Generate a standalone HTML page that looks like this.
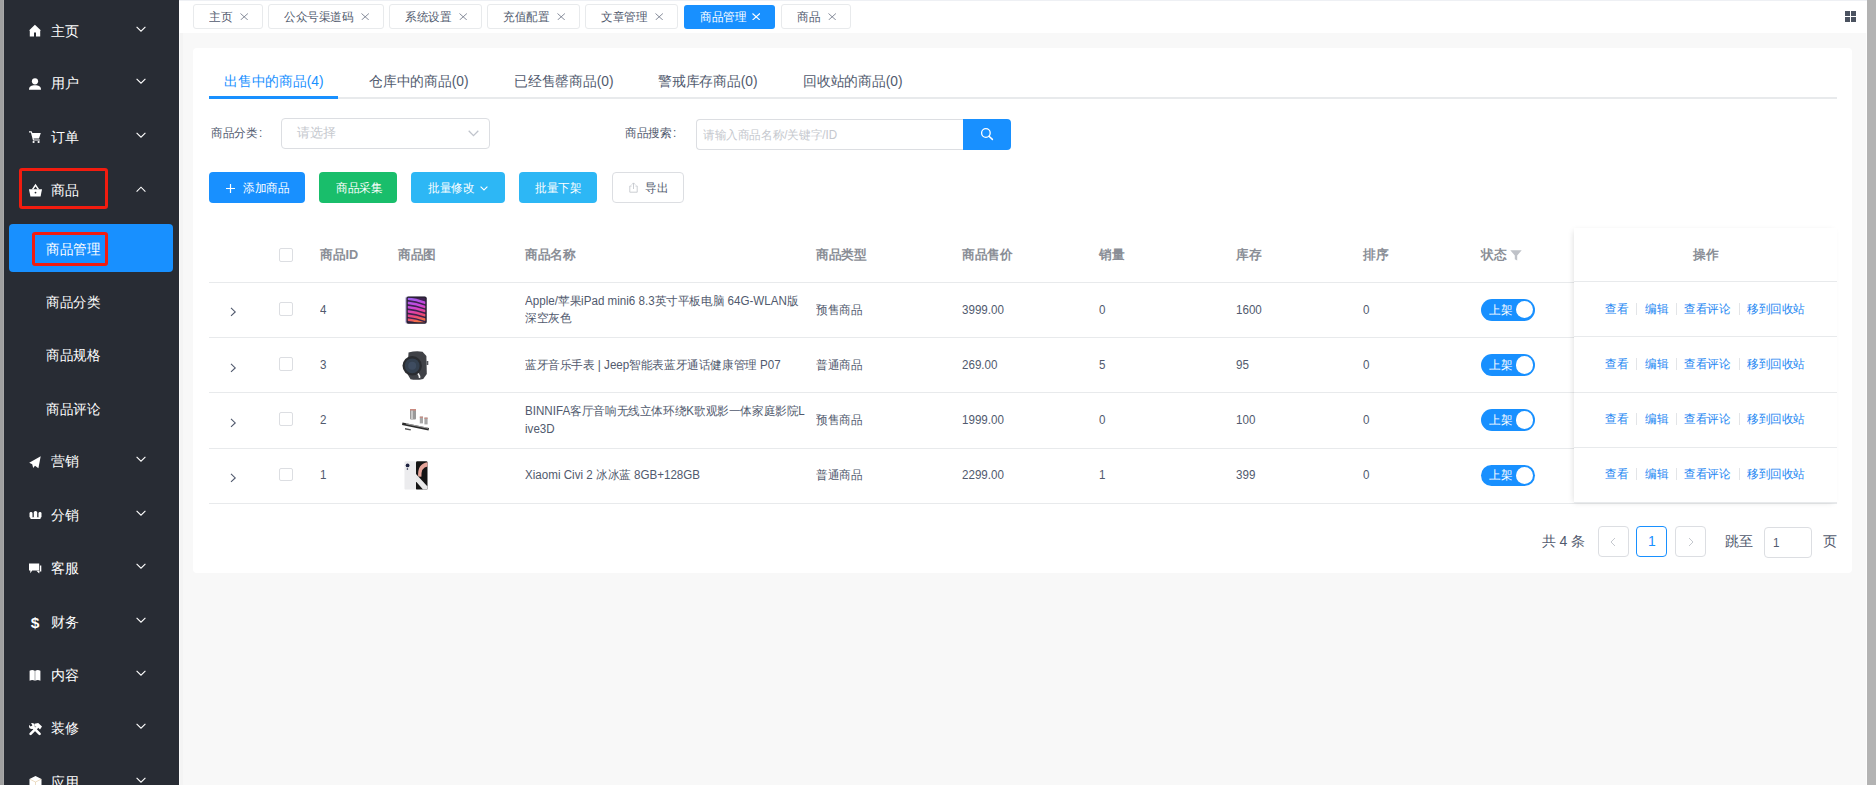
<!DOCTYPE html>
<html><head><meta charset="utf-8"><style>
*{box-sizing:border-box;margin:0;padding:0}
html,body{width:1876px;height:785px;overflow:hidden}
body{position:relative;background:#f8f8f8;font-family:"Liberation Sans",sans-serif;color:#515a6e;font-size:12px}
.a{position:absolute;white-space:nowrap}
svg{display:block}
</style></head><body>
<div class="a " style="left:0px;top:0px;width:3px;height:785px;background:#a0a0a0"></div>
<div class="a " style="left:3px;top:0px;width:1px;height:785px;background:#a9a9a9"></div>
<div class="a " style="left:4px;top:0px;width:175px;height:785px;background:#282c34"></div>
<div class="a " style="left:1867px;top:0px;width:9px;height:785px;background:#b3b3b3"></div>
<div class="a " style="left:179px;top:0px;width:1688px;height:33px;background:#fff"></div>
<div class="a " style="left:179px;top:0px;width:1688px;height:1px;background:#eef0f4"></div>
<svg class="a" style="left:29px;top:24.9px;overflow:visible" width="13" height="13" viewBox="0 0 13 13"><path d="M5.9 -0.2 L12 5.6 L11.2 5.6 L11.2 11.4 L7.0 11.4 L7.0 7.4 L5.0 7.4 L5.0 11.4 L0.8 11.4 L0.8 5.6 L0 5.6 Z" fill="#fff"/></svg>
<div class="a" style="left:51px;top:20.60px;height:21px;line-height:21px;font-size:14px;color:#fff;">主页</div>
<svg class="a" style="left:136px;top:25.6px" width="10" height="7" viewBox="0 0 10 7"><path d="M0.6 0.8 L5 5.2 L9.4 0.8" stroke="#fff" stroke-width="1.1" fill="none"/></svg>
<svg class="a" style="left:29px;top:77.6px;overflow:visible" width="13" height="13" viewBox="0 0 13 13"><circle cx="6" cy="3.3" r="3.1" fill="#fff"/><path d="M0 11.8 C0 8.2 2.5 7.2 6 7.2 C9.5 7.2 12 8.2 12 11.8 Z" fill="#fff"/></svg>
<div class="a" style="left:51px;top:73.30px;height:21px;line-height:21px;font-size:14px;color:#fff;">用户</div>
<svg class="a" style="left:136px;top:78.3px" width="10" height="7" viewBox="0 0 10 7"><path d="M0.6 0.8 L5 5.2 L9.4 0.8" stroke="#fff" stroke-width="1.1" fill="none"/></svg>
<svg class="a" style="left:29px;top:131.0px;overflow:visible" width="13" height="13" viewBox="0 0 13 13"><path d="M0 0.3 L2.6 0.3 L3.4 2 L11.8 2 L10 7.6 L4.6 7.6 L4.9 8.6 L10.8 8.6 L10.8 9.6 L4 9.6 L1.9 1.6 L0 1.6 Z" fill="#fff"/><circle cx="4.6" cy="11" r="1.1" fill="#fff"/><circle cx="9.6" cy="11" r="1.1" fill="#fff"/></svg>
<div class="a" style="left:51px;top:126.70px;height:21px;line-height:21px;font-size:14px;color:#fff;">订单</div>
<svg class="a" style="left:136px;top:131.7px" width="10" height="7" viewBox="0 0 10 7"><path d="M0.6 0.8 L5 5.2 L9.4 0.8" stroke="#fff" stroke-width="1.1" fill="none"/></svg>
<svg class="a" style="left:29px;top:184.7px;overflow:visible" width="13" height="13" viewBox="0 0 13 13"><path d="M0 4.3 L13 4.3 L11.6 11.4 L1.4 11.4 Z" fill="#fff"/><path d="M3.6 4.3 L6.5 0 L9.4 4.3" stroke="#fff" stroke-width="1.5" fill="none"/><circle cx="6.5" cy="7.6" r="0.9" fill="#282c34"/></svg>
<div class="a" style="left:51px;top:180.40px;height:21px;line-height:21px;font-size:14px;color:#fff;">商品</div>
<svg class="a" style="left:136px;top:185.9px" width="10" height="7" viewBox="0 0 10 7"><path d="M0.6 5.6 L5 1.2 L9.4 5.6" stroke="#fff" stroke-width="1.1" fill="none"/></svg>
<svg class="a" style="left:29px;top:455.7px;overflow:visible" width="13" height="13" viewBox="0 0 13 13"><path d="M11.7 0.3 L0.2 6.8 L3.2 8.3 L4.2 12 L6 9.8 L9.4 12.3 Z" fill="#fff"/></svg>
<div class="a" style="left:51px;top:451.40px;height:21px;line-height:21px;font-size:14px;color:#fff;">营销</div>
<svg class="a" style="left:136px;top:456.4px" width="10" height="7" viewBox="0 0 10 7"><path d="M0.6 0.8 L5 5.2 L9.4 0.8" stroke="#fff" stroke-width="1.1" fill="none"/></svg>
<svg class="a" style="left:29px;top:509.1px;overflow:visible" width="13" height="13" viewBox="0 0 13 13"><rect x="0.5" y="3" width="3" height="6" rx="1.4" fill="#fff"/><rect x="4.8" y="2" width="3.4" height="7" rx="1.6" fill="#fff"/><rect x="9.5" y="3" width="3" height="6" rx="1.4" fill="#fff"/><rect x="1.5" y="8.2" width="10" height="1.8" fill="#fff"/></svg>
<div class="a" style="left:51px;top:504.80px;height:21px;line-height:21px;font-size:14px;color:#fff;">分销</div>
<svg class="a" style="left:136px;top:509.8px" width="10" height="7" viewBox="0 0 10 7"><path d="M0.6 0.8 L5 5.2 L9.4 0.8" stroke="#fff" stroke-width="1.1" fill="none"/></svg>
<svg class="a" style="left:29px;top:562.5px;overflow:visible" width="13" height="13" viewBox="0 0 13 13"><path d="M0 0.6 H10.2 V7.4 H3.2 L1.3 10.2 V7.4 H0 Z" fill="#fff"/><path d="M10.9 2.4 H12.3 V8.4 H10.9 Z M7.4 7.8 H10.6 L10.2 10.4 Z" fill="#fff"/></svg>
<div class="a" style="left:51px;top:558.20px;height:21px;line-height:21px;font-size:14px;color:#fff;">客服</div>
<svg class="a" style="left:136px;top:563.2px" width="10" height="7" viewBox="0 0 10 7"><path d="M0.6 0.8 L5 5.2 L9.4 0.8" stroke="#fff" stroke-width="1.1" fill="none"/></svg>
<svg class="a" style="left:29px;top:615.8px;overflow:visible" width="13" height="13" viewBox="0 0 13 13"><text x="6" y="12" font-size="15.5" font-weight="bold" text-anchor="middle" fill="#fff" font-family="Liberation Sans">$</text></svg>
<div class="a" style="left:51px;top:611.50px;height:21px;line-height:21px;font-size:14px;color:#fff;">财务</div>
<svg class="a" style="left:136px;top:616.5px" width="10" height="7" viewBox="0 0 10 7"><path d="M0.6 0.8 L5 5.2 L9.4 0.8" stroke="#fff" stroke-width="1.1" fill="none"/></svg>
<svg class="a" style="left:29px;top:669.2px;overflow:visible" width="13" height="13" viewBox="0 0 13 13"><path d="M0.6 1.8 Q3.2 0.2 5.8 1.8 L5.8 11.8 Q3.2 10 0.6 11.8 Z M6.2 1.8 Q8.8 0.2 11.4 1.8 L11.4 11.8 Q8.8 10 6.2 11.8 Z" fill="#fff"/></svg>
<div class="a" style="left:51px;top:664.90px;height:21px;line-height:21px;font-size:14px;color:#fff;">内容</div>
<svg class="a" style="left:136px;top:669.9px" width="10" height="7" viewBox="0 0 10 7"><path d="M0.6 0.8 L5 5.2 L9.4 0.8" stroke="#fff" stroke-width="1.1" fill="none"/></svg>
<svg class="a" style="left:29px;top:722.6px;overflow:visible" width="13" height="13" viewBox="0 0 13 13"><path d="M8.2 4.2 L1.6 10.8" stroke="#fff" stroke-width="2.6" stroke-linecap="round"/><path d="M3.8 4 L10.6 10.8" stroke="#fff" stroke-width="2.6" stroke-linecap="round"/><circle cx="2.9" cy="3" r="2.9" fill="#fff"/><path d="M-0.5 1.2 L1.8 -0.5 L3.4 2.6 L1.6 3.6 Z" fill="#282c34"/><path d="M5.4 0.8 L9.2 0 L13 3.6 L11 6.4 L8.2 3.8 L6 3.6 Z" fill="#fff"/></svg>
<div class="a" style="left:51px;top:718.30px;height:21px;line-height:21px;font-size:14px;color:#fff;">装修</div>
<svg class="a" style="left:136px;top:723.3px" width="10" height="7" viewBox="0 0 10 7"><path d="M0.6 0.8 L5 5.2 L9.4 0.8" stroke="#fff" stroke-width="1.1" fill="none"/></svg>
<svg class="a" style="left:29px;top:775.8px;overflow:visible" width="13" height="13" viewBox="0 0 13 13"><path d="M6.5 0 L12.5 3 L12.5 10 L6.5 13 L0.5 10 L0.5 3 Z" fill="#fff"/><path d="M1 3.3 L6.5 6 L12 3.3 M6.5 6 L6.5 13" stroke="#e0c8a0" stroke-width="0.6" fill="none"/></svg>
<div class="a" style="left:51px;top:771.50px;height:21px;line-height:21px;font-size:14px;color:#fff;">应用</div>
<svg class="a" style="left:136px;top:776.5px" width="10" height="7" viewBox="0 0 10 7"><path d="M0.6 0.8 L5 5.2 L9.4 0.8" stroke="#fff" stroke-width="1.1" fill="none"/></svg>
<div class="a " style="left:9px;top:223.5px;width:164px;height:48.5px;background:#1890ff;border-radius:4px"></div>
<div class="a" style="left:46px;top:238.50px;height:21px;line-height:21px;font-size:14px;color:#fff;transform:scaleX(0.965);transform-origin:0 50%;">商品管理</div>
<div class="a" style="left:46px;top:292.30px;height:21px;line-height:21px;font-size:14px;color:#fff;transform:scaleX(0.965);transform-origin:0 50%;">商品分类</div>
<div class="a" style="left:46px;top:345.20px;height:21px;line-height:21px;font-size:14px;color:#fff;transform:scaleX(0.965);transform-origin:0 50%;">商品规格</div>
<div class="a" style="left:46px;top:398.50px;height:21px;line-height:21px;font-size:14px;color:#fff;transform:scaleX(0.965);transform-origin:0 50%;">商品评论</div>
<div class="a " style="left:19px;top:168px;width:89px;height:41px;border:3px solid #f21c0f;border-radius:3px"></div>
<div class="a " style="left:32px;top:232px;width:76px;height:34px;border:3px solid #f21c0f;border-radius:3px"></div>
<div class="a " style="left:193px;top:4px;width:70px;height:25px;background:#fff;border:1px solid #e8eaec;border-radius:3px"></div>
<div class="a" style="left:209px;top:8.00px;height:18px;line-height:18px;font-size:12px;color:#515a6e;transform:scaleX(0.967);transform-origin:0 50%;">主页</div>
<svg class="a" style="left:239.8px;top:12.8px" width="8.4" height="7.6" viewBox="0 0 8.4 7.6"><path d="M0.5 0.5 L7.9 7.1 M7.9 0.5 L0.5 7.1" stroke="#808695" stroke-width="0.95"/></svg>
<div class="a " style="left:268px;top:4px;width:116px;height:25px;background:#fff;border:1px solid #e8eaec;border-radius:3px"></div>
<div class="a" style="left:284px;top:8.00px;height:18px;line-height:18px;font-size:12px;color:#515a6e;transform:scaleX(0.967);transform-origin:0 50%;">公众号渠道码</div>
<svg class="a" style="left:360.8px;top:12.8px" width="8.4" height="7.6" viewBox="0 0 8.4 7.6"><path d="M0.5 0.5 L7.9 7.1 M7.9 0.5 L0.5 7.1" stroke="#808695" stroke-width="0.95"/></svg>
<div class="a " style="left:389px;top:4px;width:93px;height:25px;background:#fff;border:1px solid #e8eaec;border-radius:3px"></div>
<div class="a" style="left:405px;top:8.00px;height:18px;line-height:18px;font-size:12px;color:#515a6e;transform:scaleX(0.967);transform-origin:0 50%;">系统设置</div>
<svg class="a" style="left:458.8px;top:12.8px" width="8.4" height="7.6" viewBox="0 0 8.4 7.6"><path d="M0.5 0.5 L7.9 7.1 M7.9 0.5 L0.5 7.1" stroke="#808695" stroke-width="0.95"/></svg>
<div class="a " style="left:487px;top:4px;width:93px;height:25px;background:#fff;border:1px solid #e8eaec;border-radius:3px"></div>
<div class="a" style="left:503px;top:8.00px;height:18px;line-height:18px;font-size:12px;color:#515a6e;transform:scaleX(0.967);transform-origin:0 50%;">充值配置</div>
<svg class="a" style="left:556.8px;top:12.8px" width="8.4" height="7.6" viewBox="0 0 8.4 7.6"><path d="M0.5 0.5 L7.9 7.1 M7.9 0.5 L0.5 7.1" stroke="#808695" stroke-width="0.95"/></svg>
<div class="a " style="left:585px;top:4px;width:93px;height:25px;background:#fff;border:1px solid #e8eaec;border-radius:3px"></div>
<div class="a" style="left:601px;top:8.00px;height:18px;line-height:18px;font-size:12px;color:#515a6e;transform:scaleX(0.967);transform-origin:0 50%;">文章管理</div>
<svg class="a" style="left:654.8px;top:12.8px" width="8.4" height="7.6" viewBox="0 0 8.4 7.6"><path d="M0.5 0.5 L7.9 7.1 M7.9 0.5 L0.5 7.1" stroke="#808695" stroke-width="0.95"/></svg>
<div class="a " style="left:684px;top:5px;width:91.20000000000005px;height:23.5px;background:#1890ff;border-radius:3px"></div>
<div class="a" style="left:700px;top:8.00px;height:18px;line-height:18px;font-size:12px;color:#fff;transform:scaleX(0.967);transform-origin:0 50%;">商品管理</div>
<svg class="a" style="left:752.0px;top:12.8px" width="8.4" height="7.6" viewBox="0 0 8.4 7.6"><path d="M0.5 0.5 L7.9 7.1 M7.9 0.5 L0.5 7.1" stroke="#fff" stroke-width="1.1"/></svg>
<div class="a " style="left:781px;top:4px;width:70px;height:25px;background:#fff;border:1px solid #e8eaec;border-radius:3px"></div>
<div class="a" style="left:797px;top:8.00px;height:18px;line-height:18px;font-size:12px;color:#515a6e;transform:scaleX(0.967);transform-origin:0 50%;">商品</div>
<svg class="a" style="left:827.8px;top:12.8px" width="8.4" height="7.6" viewBox="0 0 8.4 7.6"><path d="M0.5 0.5 L7.9 7.1 M7.9 0.5 L0.5 7.1" stroke="#808695" stroke-width="0.95"/></svg>
<div class="a " style="left:1845.3px;top:11.3px;width:4.6px;height:4.6px;background:#4b5260"></div>
<div class="a " style="left:1851.3px;top:11.3px;width:4.6px;height:4.6px;background:#4b5260"></div>
<div class="a " style="left:1845.3px;top:17.3px;width:4.6px;height:4.6px;background:#4b5260"></div>
<div class="a " style="left:1851.3px;top:17.3px;width:4.6px;height:4.6px;background:#4b5260"></div>
<div class="a " style="left:179px;top:33px;width:1px;height:752px;background:#fbfbfb"></div>
<div class="a " style="left:180px;top:33px;width:3px;height:752px;background:#f4f4f4"></div>
<div class="a " style="left:1866px;top:33px;width:1px;height:752px;background:#fdfdfd"></div>
<div class="a " style="left:193px;top:48px;width:1659px;height:525px;background:#fff;border-radius:4px"></div>
<div class="a " style="left:208.5px;top:97.2px;width:1628.5px;height:1.5px;background:#e8eaec"></div>
<div class="a" style="left:223.9px;top:70.50px;height:21px;line-height:21px;font-size:14px;color:#1890ff;transform:scaleX(0.985);transform-origin:0 50%;">出售中的商品(4)</div>
<div class="a" style="left:369.0px;top:70.50px;height:21px;line-height:21px;font-size:14px;color:#515a6e;transform:scaleX(0.985);transform-origin:0 50%;">仓库中的商品(0)</div>
<div class="a" style="left:514.1px;top:70.50px;height:21px;line-height:21px;font-size:14px;color:#515a6e;transform:scaleX(0.985);transform-origin:0 50%;">已经售罄商品(0)</div>
<div class="a" style="left:658.3px;top:70.50px;height:21px;line-height:21px;font-size:14px;color:#515a6e;transform:scaleX(0.985);transform-origin:0 50%;">警戒库存商品(0)</div>
<div class="a" style="left:802.9px;top:70.50px;height:21px;line-height:21px;font-size:14px;color:#515a6e;transform:scaleX(0.985);transform-origin:0 50%;">回收站的商品(0)</div>
<div class="a " style="left:208.5px;top:96.3px;width:129.5px;height:2.4px;background:#1890ff"></div>
<div class="a" style="left:211px;top:124.20px;height:18px;line-height:18px;font-size:12px;color:#515a6e;transform:scaleX(0.967);transform-origin:0 50%;">商品分类<span style="margin-left:1.6px">:</span></div>
<div class="a " style="left:281px;top:118px;width:209px;height:30.5px;border:1px solid #dcdee2;border-radius:4px;background:#fff"></div>
<div class="a" style="left:297px;top:123.30px;height:20px;line-height:20px;font-size:13px;color:#c5c8ce;">请选择</div>
<svg class="a" style="left:468px;top:130px" width="11" height="7" viewBox="0 0 11 7"><path d="M0.7 0.8 L5.5 5.6 L10.3 0.8" stroke="#c0c4cc" stroke-width="1.3" fill="none"/></svg>
<div class="a" style="left:625px;top:124.20px;height:18px;line-height:18px;font-size:12px;color:#515a6e;transform:scaleX(0.967);transform-origin:0 50%;">商品搜索<span style="margin-left:1.6px">:</span></div>
<div class="a " style="left:695.5px;top:119px;width:268px;height:30.8px;border:1px solid #dcdee2;border-right:none;border-radius:4px 0 0 4px;background:#fff"></div>
<div class="a" style="left:703px;top:125.50px;height:18px;line-height:18px;font-size:12px;color:#c5c8ce;transform:scaleX(0.967);transform-origin:0 50%;">请输入商品名称/关键字/ID</div>
<div class="a " style="left:963px;top:119px;width:48px;height:31px;background:#1890ff;border-radius:0 4px 4px 0"></div>
<svg class="a" style="left:979px;top:126px" width="16" height="16" viewBox="0 0 16 16"><circle cx="6.9" cy="7" r="4.3" stroke="#fff" stroke-width="1.3" fill="none"/><path d="M10 10.2 L13.4 13.4" stroke="#fff" stroke-width="1.5" stroke-linecap="round"/></svg>
<div class="a " style="left:208.8px;top:172px;width:95.89999999999998px;height:31px;background:#1890ff;border-radius:4px"></div>
<div class="a " style="left:319.4px;top:172px;width:77.40000000000003px;height:31px;background:#19be6b;border-radius:4px"></div>
<div class="a " style="left:411.3px;top:172px;width:93.59999999999997px;height:31px;background:#2db7f5;border-radius:4px"></div>
<div class="a " style="left:519px;top:172px;width:77.70000000000005px;height:31px;background:#2db7f5;border-radius:4px"></div>
<svg class="a" style="left:226px;top:183.5px" width="9" height="9" viewBox="0 0 9 9"><path d="M4.5 0 V9 M0 4.5 H9" stroke="#fff" stroke-width="1.2"/></svg>
<div class="a" style="left:243px;top:178.50px;height:18px;line-height:18px;font-size:12px;color:#fff;transform:scaleX(0.967);transform-origin:0 50%;">添加商品</div>
<div class="a" style="left:335.5px;top:178.50px;height:18px;line-height:18px;font-size:12px;color:#fff;transform:scaleX(0.967);transform-origin:0 50%;">商品采集</div>
<div class="a" style="left:427.5px;top:178.50px;height:18px;line-height:18px;font-size:12px;color:#fff;transform:scaleX(0.967);transform-origin:0 50%;">批量修改</div>
<svg class="a" style="left:480px;top:186px" width="8" height="5" viewBox="0 0 8 5"><path d="M0.6 0.6 L4 4 L7.4 0.6" stroke="#fff" stroke-width="1.1" fill="none"/></svg>
<div class="a" style="left:535px;top:178.50px;height:18px;line-height:18px;font-size:12px;color:#fff;transform:scaleX(0.967);transform-origin:0 50%;">批量下架</div>
<div class="a " style="left:611.5px;top:172px;width:72px;height:31px;border:1px solid #dcdee2;border-radius:4px;background:#fff"></div>
<svg class="a" style="left:628.5px;top:182px" width="9" height="11" viewBox="0 0 9 11"><path d="M2.6 4 H0.8 V10.2 H8.2 V4 H6.4 M4.5 7 V1 M2.8 2.6 L4.5 0.9 L6.2 2.6" stroke="#c5c8ce" stroke-width="0.9" fill="none"/></svg>
<div class="a" style="left:645px;top:178.50px;height:18px;line-height:18px;font-size:12px;color:#515a6e;transform:scaleX(0.967);transform-origin:0 50%;">导出</div>
<div class="a" style="left:320px;top:244.90px;height:20px;line-height:20px;font-size:13px;color:#8a8e96;transform:scaleX(0.977);transform-origin:0 50%;font-weight:bold">商品ID</div>
<div class="a" style="left:398px;top:244.90px;height:20px;line-height:20px;font-size:13px;color:#8a8e96;transform:scaleX(0.977);transform-origin:0 50%;font-weight:bold">商品图</div>
<div class="a" style="left:524.5px;top:244.90px;height:20px;line-height:20px;font-size:13px;color:#8a8e96;transform:scaleX(0.977);transform-origin:0 50%;font-weight:bold">商品名称</div>
<div class="a" style="left:815.5px;top:244.90px;height:20px;line-height:20px;font-size:13px;color:#8a8e96;transform:scaleX(0.977);transform-origin:0 50%;font-weight:bold">商品类型</div>
<div class="a" style="left:962.3px;top:244.90px;height:20px;line-height:20px;font-size:13px;color:#8a8e96;transform:scaleX(0.977);transform-origin:0 50%;font-weight:bold">商品售价</div>
<div class="a" style="left:1099px;top:244.90px;height:20px;line-height:20px;font-size:13px;color:#8a8e96;transform:scaleX(0.977);transform-origin:0 50%;font-weight:bold">销量</div>
<div class="a" style="left:1235.5px;top:244.90px;height:20px;line-height:20px;font-size:13px;color:#8a8e96;transform:scaleX(0.977);transform-origin:0 50%;font-weight:bold">库存</div>
<div class="a" style="left:1363px;top:244.90px;height:20px;line-height:20px;font-size:13px;color:#8a8e96;transform:scaleX(0.977);transform-origin:0 50%;font-weight:bold">排序</div>
<div class="a" style="left:1480.6px;top:244.90px;height:20px;line-height:20px;font-size:13px;color:#8a8e96;transform:scaleX(0.977);transform-origin:0 50%;font-weight:bold">状态</div>
<svg class="a" style="left:1510px;top:249.5px" width="12" height="11" viewBox="0 0 12 11"><path d="M0.3 0.3 H11.7 L7.2 5.4 V10.4 L4.8 9.2 V5.4 Z" fill="#bfc2c8"/></svg>
<div class="a " style="left:279.3px;top:248px;width:13.6px;height:13.6px;border:1px solid #dcdee2;border-radius:2px;background:#fff"></div>
<div class="a " style="left:208.5px;top:282px;width:1628.5px;height:1px;background:#e8eaec"></div>
<div class="a " style="left:208.5px;top:337px;width:1628.5px;height:1px;background:#e8eaec"></div>
<div class="a " style="left:208.5px;top:392px;width:1628.5px;height:1px;background:#e8eaec"></div>
<div class="a " style="left:208.5px;top:447.5px;width:1628.5px;height:1px;background:#e8eaec"></div>
<div class="a " style="left:208.5px;top:503px;width:1628.5px;height:1px;background:#e8eaec"></div>
<svg class="a" style="left:229.6px;top:307.4px" width="7" height="10" viewBox="0 0 7 10"><path d="M1 0.9 L5.2 4.9 L1 8.9" stroke="#515a6e" stroke-width="1.15" fill="none"/></svg>
<div class="a " style="left:279.3px;top:302.0px;width:13.6px;height:13.6px;border:1px solid #dcdee2;border-radius:2px;background:#fff"></div>
<div class="a" style="left:320px;top:300.60px;height:18px;line-height:18px;font-size:12px;color:#515a6e;transform:scaleX(0.967);transform-origin:0 50%;">4</div>
<svg class="a" style="left:397.5px;top:291.6px" width="36" height="36" viewBox="0 0 36 36"><defs><linearGradient id="ipg" x1="0" y1="0" x2="0.2" y2="1"><stop offset="0" stop-color="#9a60f0"/><stop offset="0.4" stop-color="#d044d8"/><stop offset="0.72" stop-color="#ea4480"/><stop offset="1" stop-color="#f27540"/></linearGradient><clipPath id="ipc"><rect x="9.8" y="5.8" width="17.5" height="24.5"/></clipPath></defs><rect x="7.2" y="4.4" width="21.5" height="27.3" rx="2" fill="#c2b6e0"/><rect x="8.4" y="4.4" width="20.3" height="27.3" rx="2" fill="#27232d"/><rect x="9.8" y="5.8" width="17.5" height="24.5" fill="#3d2250"/><g clip-path="url(#ipc)"><path d="M9 6.6 Q18 7.6 28 11 M9 10.8 Q18 11.8 28 15.2 M9 15 Q18 16 28 19.4 M9 19.2 Q18 20.2 28 23.6 M9 23.4 Q18 24.4 28 27.8 M9 27.6 Q18 28.6 28 32" stroke="url(#ipg)" stroke-width="2.5" fill="none"/></g></svg>
<div class="a" style="left:524.5px;top:291.80px;height:18px;line-height:18px;font-size:12px;color:#515a6e;transform:scaleX(0.967);transform-origin:0 50%;">Apple/苹果iPad mini6 8.3英寸平板电脑 64G-WLAN版</div>
<div class="a" style="left:524.5px;top:309.40px;height:18px;line-height:18px;font-size:12px;color:#515a6e;transform:scaleX(0.967);transform-origin:0 50%;">深空灰色</div>
<div class="a" style="left:815.5px;top:300.60px;height:18px;line-height:18px;font-size:12px;color:#515a6e;transform:scaleX(0.967);transform-origin:0 50%;">预售商品</div>
<div class="a" style="left:962.3px;top:300.60px;height:18px;line-height:18px;font-size:12px;color:#515a6e;transform:scaleX(0.967);transform-origin:0 50%;">3999.00</div>
<div class="a" style="left:1099px;top:300.60px;height:18px;line-height:18px;font-size:12px;color:#515a6e;transform:scaleX(0.967);transform-origin:0 50%;">0</div>
<div class="a" style="left:1235.5px;top:300.60px;height:18px;line-height:18px;font-size:12px;color:#515a6e;transform:scaleX(0.967);transform-origin:0 50%;">1600</div>
<div class="a" style="left:1363px;top:300.60px;height:18px;line-height:18px;font-size:12px;color:#515a6e;transform:scaleX(0.967);transform-origin:0 50%;">0</div>
<div class="a " style="left:1480.7px;top:299.0px;width:54.5px;height:21.7px;background:#1890ff;border-radius:11px"></div>
<div class="a " style="left:1515.7px;top:300.90000000000003px;width:17.6px;height:17.6px;background:#fff;border-radius:50%"></div>
<div class="a" style="left:1488.5px;top:300.60px;height:18px;line-height:18px;font-size:12px;color:#fff;transform:scaleX(0.967);transform-origin:0 50%;">上架</div>
<svg class="a" style="left:229.6px;top:362.6px" width="7" height="10" viewBox="0 0 7 10"><path d="M1 0.9 L5.2 4.9 L1 8.9" stroke="#515a6e" stroke-width="1.15" fill="none"/></svg>
<div class="a " style="left:279.3px;top:357.2px;width:13.6px;height:13.6px;border:1px solid #dcdee2;border-radius:2px;background:#fff"></div>
<div class="a" style="left:320px;top:355.80px;height:18px;line-height:18px;font-size:12px;color:#515a6e;transform:scaleX(0.967);transform-origin:0 50%;">3</div>
<svg class="a" style="left:397.5px;top:346.8px" width="36" height="36" viewBox="0 0 36 36"><path d="M10.5 5.5 Q18 3.6 24.5 4.8 L28.4 9 L28.8 27 L25.2 32 Q18 33.6 12.5 32.2 L9.5 27 Z" fill="#404247"/><rect x="28.5" y="14" width="1.8" height="4" fill="#55575c"/><circle cx="14.2" cy="18.8" r="9.7" fill="#2a2c30"/><circle cx="14.2" cy="18.8" r="7.4" fill="#34404f"/><circle cx="14.2" cy="18.8" r="4" fill="#3e4c60"/><path d="M20 26.5 Q22 29 21.5 31" stroke="#f4f4f4" stroke-width="1.6" fill="none"/></svg>
<div class="a" style="left:524.5px;top:355.80px;height:18px;line-height:18px;font-size:12px;color:#515a6e;transform:scaleX(0.967);transform-origin:0 50%;">蓝牙音乐手表 | Jeep智能表蓝牙通话健康管理 P07</div>
<div class="a" style="left:815.5px;top:355.80px;height:18px;line-height:18px;font-size:12px;color:#515a6e;transform:scaleX(0.967);transform-origin:0 50%;">普通商品</div>
<div class="a" style="left:962.3px;top:355.80px;height:18px;line-height:18px;font-size:12px;color:#515a6e;transform:scaleX(0.967);transform-origin:0 50%;">269.00</div>
<div class="a" style="left:1099px;top:355.80px;height:18px;line-height:18px;font-size:12px;color:#515a6e;transform:scaleX(0.967);transform-origin:0 50%;">5</div>
<div class="a" style="left:1235.5px;top:355.80px;height:18px;line-height:18px;font-size:12px;color:#515a6e;transform:scaleX(0.967);transform-origin:0 50%;">95</div>
<div class="a" style="left:1363px;top:355.80px;height:18px;line-height:18px;font-size:12px;color:#515a6e;transform:scaleX(0.967);transform-origin:0 50%;">0</div>
<div class="a " style="left:1480.7px;top:354.2px;width:54.5px;height:21.7px;background:#1890ff;border-radius:11px"></div>
<div class="a " style="left:1515.7px;top:356.1px;width:17.6px;height:17.6px;background:#fff;border-radius:50%"></div>
<div class="a" style="left:1488.5px;top:355.80px;height:18px;line-height:18px;font-size:12px;color:#fff;transform:scaleX(0.967);transform-origin:0 50%;">上架</div>
<svg class="a" style="left:229.6px;top:417.8px" width="7" height="10" viewBox="0 0 7 10"><path d="M1 0.9 L5.2 4.9 L1 8.9" stroke="#515a6e" stroke-width="1.15" fill="none"/></svg>
<div class="a " style="left:279.3px;top:412.4px;width:13.6px;height:13.6px;border:1px solid #dcdee2;border-radius:2px;background:#fff"></div>
<div class="a" style="left:320px;top:411.00px;height:18px;line-height:18px;font-size:12px;color:#515a6e;transform:scaleX(0.967);transform-origin:0 50%;">2</div>
<svg class="a" style="left:397.5px;top:402.0px" width="36" height="36" viewBox="0 0 36 36"><rect x="12" y="7" width="6" height="10.5" rx="1" fill="#9a9a9a"/><rect x="12" y="7" width="6" height="1.6" fill="#c98a80"/><rect x="13" y="8.6" width="2" height="8.8" fill="#c8c8c8"/><rect x="21.8" y="14.6" width="3.2" height="6.8" fill="#a8a8a8"/><rect x="21.8" y="14.6" width="3.2" height="1.2" fill="#c98a80"/><rect x="26.4" y="15.6" width="3.2" height="6.8" fill="#a8a8a8"/><rect x="26.4" y="15.6" width="3.2" height="1.2" fill="#c98a80"/><path d="M4.5 20.5 L31 26 L30.5 28.6 L4 23 Z" fill="#2c2c2c"/><path d="M8 21.8 L30 26.2" stroke="#bbbbbb" stroke-width="0.8"/><path d="M7 26 L13 27.2 L12.6 28.6 L7 27.6 Z" fill="#555"/></svg>
<div class="a" style="left:524.5px;top:402.20px;height:18px;line-height:18px;font-size:12px;color:#515a6e;transform:scaleX(0.967);transform-origin:0 50%;">BINNIFA客厅音响无线立体环绕K歌观影一体家庭影院L</div>
<div class="a" style="left:524.5px;top:419.80px;height:18px;line-height:18px;font-size:12px;color:#515a6e;transform:scaleX(0.967);transform-origin:0 50%;">ive3D</div>
<div class="a" style="left:815.5px;top:411.00px;height:18px;line-height:18px;font-size:12px;color:#515a6e;transform:scaleX(0.967);transform-origin:0 50%;">预售商品</div>
<div class="a" style="left:962.3px;top:411.00px;height:18px;line-height:18px;font-size:12px;color:#515a6e;transform:scaleX(0.967);transform-origin:0 50%;">1999.00</div>
<div class="a" style="left:1099px;top:411.00px;height:18px;line-height:18px;font-size:12px;color:#515a6e;transform:scaleX(0.967);transform-origin:0 50%;">0</div>
<div class="a" style="left:1235.5px;top:411.00px;height:18px;line-height:18px;font-size:12px;color:#515a6e;transform:scaleX(0.967);transform-origin:0 50%;">100</div>
<div class="a" style="left:1363px;top:411.00px;height:18px;line-height:18px;font-size:12px;color:#515a6e;transform:scaleX(0.967);transform-origin:0 50%;">0</div>
<div class="a " style="left:1480.7px;top:409.4px;width:54.5px;height:21.7px;background:#1890ff;border-radius:11px"></div>
<div class="a " style="left:1515.7px;top:411.3px;width:17.6px;height:17.6px;background:#fff;border-radius:50%"></div>
<div class="a" style="left:1488.5px;top:411.00px;height:18px;line-height:18px;font-size:12px;color:#fff;transform:scaleX(0.967);transform-origin:0 50%;">上架</div>
<svg class="a" style="left:229.6px;top:473.2px" width="7" height="10" viewBox="0 0 7 10"><path d="M1 0.9 L5.2 4.9 L1 8.9" stroke="#515a6e" stroke-width="1.15" fill="none"/></svg>
<div class="a " style="left:279.3px;top:467.79999999999995px;width:13.6px;height:13.6px;border:1px solid #dcdee2;border-radius:2px;background:#fff"></div>
<div class="a" style="left:320px;top:466.40px;height:18px;line-height:18px;font-size:12px;color:#515a6e;transform:scaleX(0.967);transform-origin:0 50%;">1</div>
<svg class="a" style="left:397.5px;top:457.4px" width="36" height="36" viewBox="0 0 36 36"><rect x="6.5" y="4.3" width="11.5" height="28.3" rx="1.2" fill="#ececee"/><circle cx="9.6" cy="8.4" r="1.9" fill="#1d2240"/><circle cx="9.4" cy="12" r="0.8" fill="#1d2240"/><rect x="18" y="4.3" width="11.5" height="28.3" rx="1.2" fill="#141414"/><path d="M29.5 5.2 Q19.2 6.8 20.2 19.5 L23.4 19.8 Q23 10.2 29.5 9.4 Z" fill="#e6a59a"/><path d="M18 17 L29.5 29.5 L29.5 32.6 L25 32.6 L18 24.5 Z" fill="#e9e9e9"/></svg>
<div class="a" style="left:524.5px;top:466.40px;height:18px;line-height:18px;font-size:12px;color:#515a6e;transform:scaleX(0.967);transform-origin:0 50%;">Xiaomi Civi 2 冰冰蓝 8GB+128GB</div>
<div class="a" style="left:815.5px;top:466.40px;height:18px;line-height:18px;font-size:12px;color:#515a6e;transform:scaleX(0.967);transform-origin:0 50%;">普通商品</div>
<div class="a" style="left:962.3px;top:466.40px;height:18px;line-height:18px;font-size:12px;color:#515a6e;transform:scaleX(0.967);transform-origin:0 50%;">2299.00</div>
<div class="a" style="left:1099px;top:466.40px;height:18px;line-height:18px;font-size:12px;color:#515a6e;transform:scaleX(0.967);transform-origin:0 50%;">1</div>
<div class="a" style="left:1235.5px;top:466.40px;height:18px;line-height:18px;font-size:12px;color:#515a6e;transform:scaleX(0.967);transform-origin:0 50%;">399</div>
<div class="a" style="left:1363px;top:466.40px;height:18px;line-height:18px;font-size:12px;color:#515a6e;transform:scaleX(0.967);transform-origin:0 50%;">0</div>
<div class="a " style="left:1480.7px;top:464.79999999999995px;width:54.5px;height:21.7px;background:#1890ff;border-radius:11px"></div>
<div class="a " style="left:1515.7px;top:466.7px;width:17.6px;height:17.6px;background:#fff;border-radius:50%"></div>
<div class="a" style="left:1488.5px;top:466.40px;height:18px;line-height:18px;font-size:12px;color:#fff;transform:scaleX(0.967);transform-origin:0 50%;">上架</div>
<div class="a " style="left:1573.5px;top:228px;width:263.5px;height:275px;background:#fff;box-shadow:-2px 1px 6px -2px rgba(0,0,0,0.15)"></div>
<div class="a" style="left:1692.8px;top:244.90px;height:20px;line-height:20px;font-size:13px;color:#8a8e96;transform:scaleX(0.977);transform-origin:0 50%;font-weight:bold">操作</div>
<div class="a " style="left:1573.5px;top:281px;width:263.5px;height:1px;background:#e8eaec"></div>
<div class="a " style="left:1573.5px;top:336px;width:263.5px;height:1px;background:#e8eaec"></div>
<div class="a " style="left:1573.5px;top:391.5px;width:263.5px;height:1px;background:#e8eaec"></div>
<div class="a " style="left:1573.5px;top:447px;width:263.5px;height:1px;background:#e8eaec"></div>
<div class="a " style="left:1573.5px;top:502px;width:263.5px;height:1px;background:#e8eaec"></div>
<div class="a" style="left:1605px;top:299.60px;height:18px;line-height:18px;font-size:12px;color:#1c86f2;transform:scaleX(0.967);transform-origin:0 50%;">查看</div>
<div class="a" style="left:1644.6px;top:299.60px;height:18px;line-height:18px;font-size:12px;color:#1c86f2;transform:scaleX(0.967);transform-origin:0 50%;">编辑</div>
<div class="a" style="left:1684.3px;top:299.60px;height:18px;line-height:18px;font-size:12px;color:#1c86f2;transform:scaleX(0.967);transform-origin:0 50%;">查看评论</div>
<div class="a" style="left:1747.4px;top:299.60px;height:18px;line-height:18px;font-size:12px;color:#1c86f2;transform:scaleX(0.967);transform-origin:0 50%;">移到回收站</div>
<div class="a " style="left:1636px;top:302.6px;width:1px;height:12px;background:#e3e5e8"></div>
<div class="a " style="left:1676.1px;top:302.6px;width:1px;height:12px;background:#e3e5e8"></div>
<div class="a " style="left:1738.9px;top:302.6px;width:1px;height:12px;background:#e3e5e8"></div>
<div class="a" style="left:1605px;top:354.80px;height:18px;line-height:18px;font-size:12px;color:#1c86f2;transform:scaleX(0.967);transform-origin:0 50%;">查看</div>
<div class="a" style="left:1644.6px;top:354.80px;height:18px;line-height:18px;font-size:12px;color:#1c86f2;transform:scaleX(0.967);transform-origin:0 50%;">编辑</div>
<div class="a" style="left:1684.3px;top:354.80px;height:18px;line-height:18px;font-size:12px;color:#1c86f2;transform:scaleX(0.967);transform-origin:0 50%;">查看评论</div>
<div class="a" style="left:1747.4px;top:354.80px;height:18px;line-height:18px;font-size:12px;color:#1c86f2;transform:scaleX(0.967);transform-origin:0 50%;">移到回收站</div>
<div class="a " style="left:1636px;top:357.8px;width:1px;height:12px;background:#e3e5e8"></div>
<div class="a " style="left:1676.1px;top:357.8px;width:1px;height:12px;background:#e3e5e8"></div>
<div class="a " style="left:1738.9px;top:357.8px;width:1px;height:12px;background:#e3e5e8"></div>
<div class="a" style="left:1605px;top:410.00px;height:18px;line-height:18px;font-size:12px;color:#1c86f2;transform:scaleX(0.967);transform-origin:0 50%;">查看</div>
<div class="a" style="left:1644.6px;top:410.00px;height:18px;line-height:18px;font-size:12px;color:#1c86f2;transform:scaleX(0.967);transform-origin:0 50%;">编辑</div>
<div class="a" style="left:1684.3px;top:410.00px;height:18px;line-height:18px;font-size:12px;color:#1c86f2;transform:scaleX(0.967);transform-origin:0 50%;">查看评论</div>
<div class="a" style="left:1747.4px;top:410.00px;height:18px;line-height:18px;font-size:12px;color:#1c86f2;transform:scaleX(0.967);transform-origin:0 50%;">移到回收站</div>
<div class="a " style="left:1636px;top:413px;width:1px;height:12px;background:#e3e5e8"></div>
<div class="a " style="left:1676.1px;top:413px;width:1px;height:12px;background:#e3e5e8"></div>
<div class="a " style="left:1738.9px;top:413px;width:1px;height:12px;background:#e3e5e8"></div>
<div class="a" style="left:1605px;top:465.40px;height:18px;line-height:18px;font-size:12px;color:#1c86f2;transform:scaleX(0.967);transform-origin:0 50%;">查看</div>
<div class="a" style="left:1644.6px;top:465.40px;height:18px;line-height:18px;font-size:12px;color:#1c86f2;transform:scaleX(0.967);transform-origin:0 50%;">编辑</div>
<div class="a" style="left:1684.3px;top:465.40px;height:18px;line-height:18px;font-size:12px;color:#1c86f2;transform:scaleX(0.967);transform-origin:0 50%;">查看评论</div>
<div class="a" style="left:1747.4px;top:465.40px;height:18px;line-height:18px;font-size:12px;color:#1c86f2;transform:scaleX(0.967);transform-origin:0 50%;">移到回收站</div>
<div class="a " style="left:1636px;top:468.4px;width:1px;height:12px;background:#e3e5e8"></div>
<div class="a " style="left:1676.1px;top:468.4px;width:1px;height:12px;background:#e3e5e8"></div>
<div class="a " style="left:1738.9px;top:468.4px;width:1px;height:12px;background:#e3e5e8"></div>
<div class="a" style="left:1541.5px;top:530.90px;height:21px;line-height:21px;font-size:14px;color:#515a6e;">共 4 条</div>
<div class="a " style="left:1598.4px;top:526.2px;width:30.5px;height:30.7px;border:1px solid #dcdee2;border-radius:4px;background:#fff"></div>
<svg class="a" style="left:1610px;top:537px" width="6" height="10" viewBox="0 0 6 10"><path d="M5 1 L1 5 L5 9" stroke="#c5c8ce" stroke-width="1" fill="none"/></svg>
<div class="a " style="left:1636.1px;top:526.2px;width:30.5px;height:30.7px;border:1px solid #1890ff;border-radius:4px;background:#fff"></div>
<div class="a" style="left:1648px;top:531.00px;height:21px;line-height:21px;font-size:14px;color:#1890ff;">1</div>
<div class="a " style="left:1675.2px;top:526.2px;width:30.5px;height:30.7px;border:1px solid #dcdee2;border-radius:4px;background:#fff"></div>
<svg class="a" style="left:1687.5px;top:537px" width="6" height="10" viewBox="0 0 6 10"><path d="M1 1 L5 5 L1 9" stroke="#c5c8ce" stroke-width="1" fill="none"/></svg>
<div class="a" style="left:1724.5px;top:530.90px;height:21px;line-height:21px;font-size:14px;color:#515a6e;">跳至</div>
<div class="a " style="left:1763.5px;top:527px;width:48px;height:31px;border:1px solid #dcdee2;border-radius:4px;background:#fff"></div>
<div class="a" style="left:1773px;top:533.50px;height:18px;line-height:18px;font-size:12px;color:#515a6e;transform:scaleX(0.967);transform-origin:0 50%;">1</div>
<div class="a" style="left:1823px;top:530.90px;height:21px;line-height:21px;font-size:14px;color:#515a6e;">页</div>
</body></html>
